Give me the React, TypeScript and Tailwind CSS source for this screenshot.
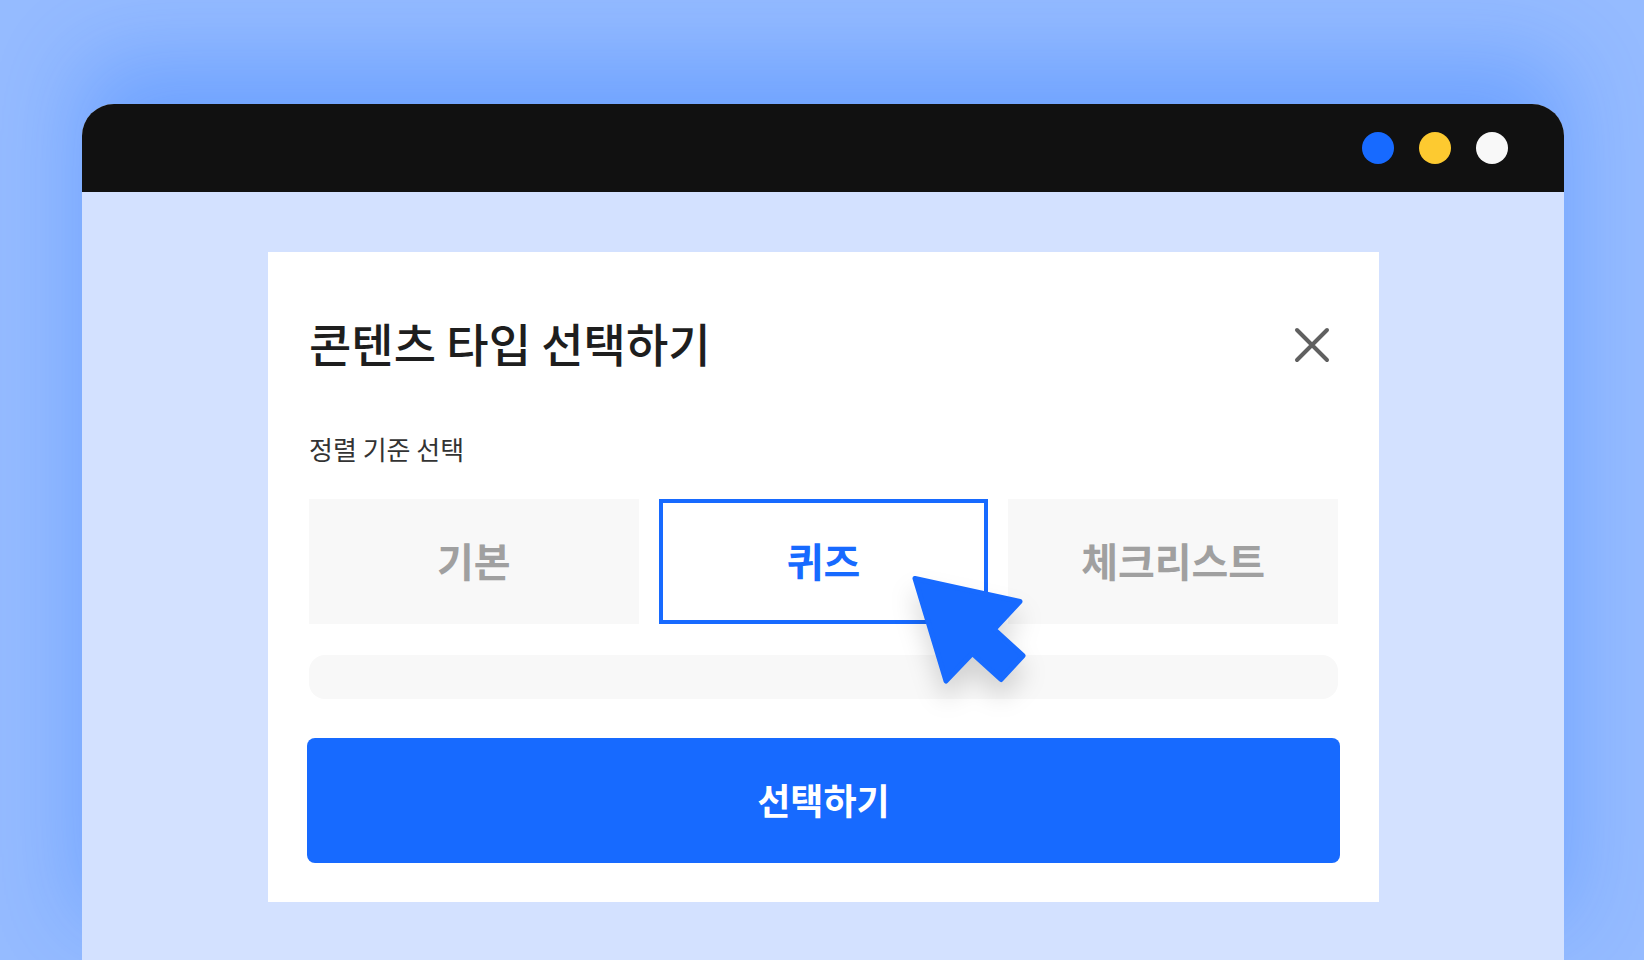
import { useState } from 'react';
import clsx from 'clsx';

const contentTypes = ['기본', '퀴즈', '체크리스트'];

const CloseIcon = () => (
  <svg className="h-9 w-9" viewBox="0 0 36 36" fill="none" stroke="currentColor" aria-hidden="true">
    <path strokeLinecap="round" strokeWidth={4} d="M3 3l30 30M33 3L3 33" />
  </svg>
);

const Cursor = () => (
  <svg
    className="pointer-events-none absolute -right-[42px] -bottom-16 z-10 w-[114px] overflow-visible text-[#176aff] drop-shadow-[0_16px_12px_rgba(0,0,0,0.15)]"
    viewBox="0 0 114 108"
    fill="currentColor"
    stroke="currentColor"
    aria-hidden="true"
  >
    <path
      strokeLinejoin="round"
      strokeWidth={5}
      d="M3 2.5L108 25.5L82.2 53.3L111 79.7L89 103.5L60.3 77.5L34 105Z"
    />
  </svg>
);

const App = () => {
  const [selected, setSelected] = useState('퀴즈');

  return (
    <div className="flex min-h-screen flex-col overflow-hidden bg-[#95bbff] pt-[104px] pr-20 pl-[82px] font-['Noto_Sans_CJK_KR',sans-serif]">
      <div className="flex grow flex-col rounded-t-[32px] bg-[#d3e1ff] shadow-[0_-44px_88px_rgba(23,106,255,0.31)]">
        <div className="flex h-[88px] items-center justify-end gap-[25px] rounded-t-[32px] bg-[#111111] pr-14">
          <span className="h-8 w-8 rounded-full bg-[#176aff]" />
          <span className="h-8 w-8 rounded-full bg-[#fdca30]" />
          <span className="h-8 w-8 rounded-full bg-[#f8f8f8]" />
        </div>

        <main className="mt-[60px] mr-[185px] mb-14 ml-[186px] bg-white px-[39px] pt-[61px] pb-[39px]">
          <div className="mx-0.5 flex h-16 items-center justify-between">
            <h1 className="pb-1.5 text-[46px] leading-[58px] font-medium text-[#1e1e1e]">콘텐츠 타입 선택하기</h1>
            <button type="button" aria-label="닫기" className="mr-2 text-[#606060]">
              <CloseIcon />
            </button>
          </div>

          <p id="type-label" className="mx-0.5 mt-14 text-[26px] leading-8 text-[#333333]">
            정렬 기준 선택
          </p>

          <div role="group" aria-labelledby="type-label" className="mx-0.5 mt-[34px] grid grid-cols-3 gap-5">
            {contentTypes.map((type) => (
              <button
                key={type}
                type="button"
                aria-pressed={selected === type}
                onClick={() => setSelected(type)}
                className={clsx(
                  'relative h-[125px] border-4 pb-1 text-[40px] leading-none font-bold',
                  selected === type
                    ? 'border-[#176aff] bg-white text-[#176aff]'
                    : 'border-[#f8f8f8] bg-[#f8f8f8] text-[#a0a0a0]'
                )}
              >
                {type}
                {selected === type && <Cursor />}
              </button>
            ))}
          </div>

          <div className="mx-0.5 mt-[31px] h-11 rounded-2xl bg-[#f8f8f8]" />

          <button
            type="button"
            className="mt-[39px] h-[125px] w-full rounded-lg bg-[#176aff] pb-1 text-[36px] leading-none font-bold text-white"
          >
            선택하기
          </button>
        </main>
      </div>
    </div>
  );
};

export default App;
